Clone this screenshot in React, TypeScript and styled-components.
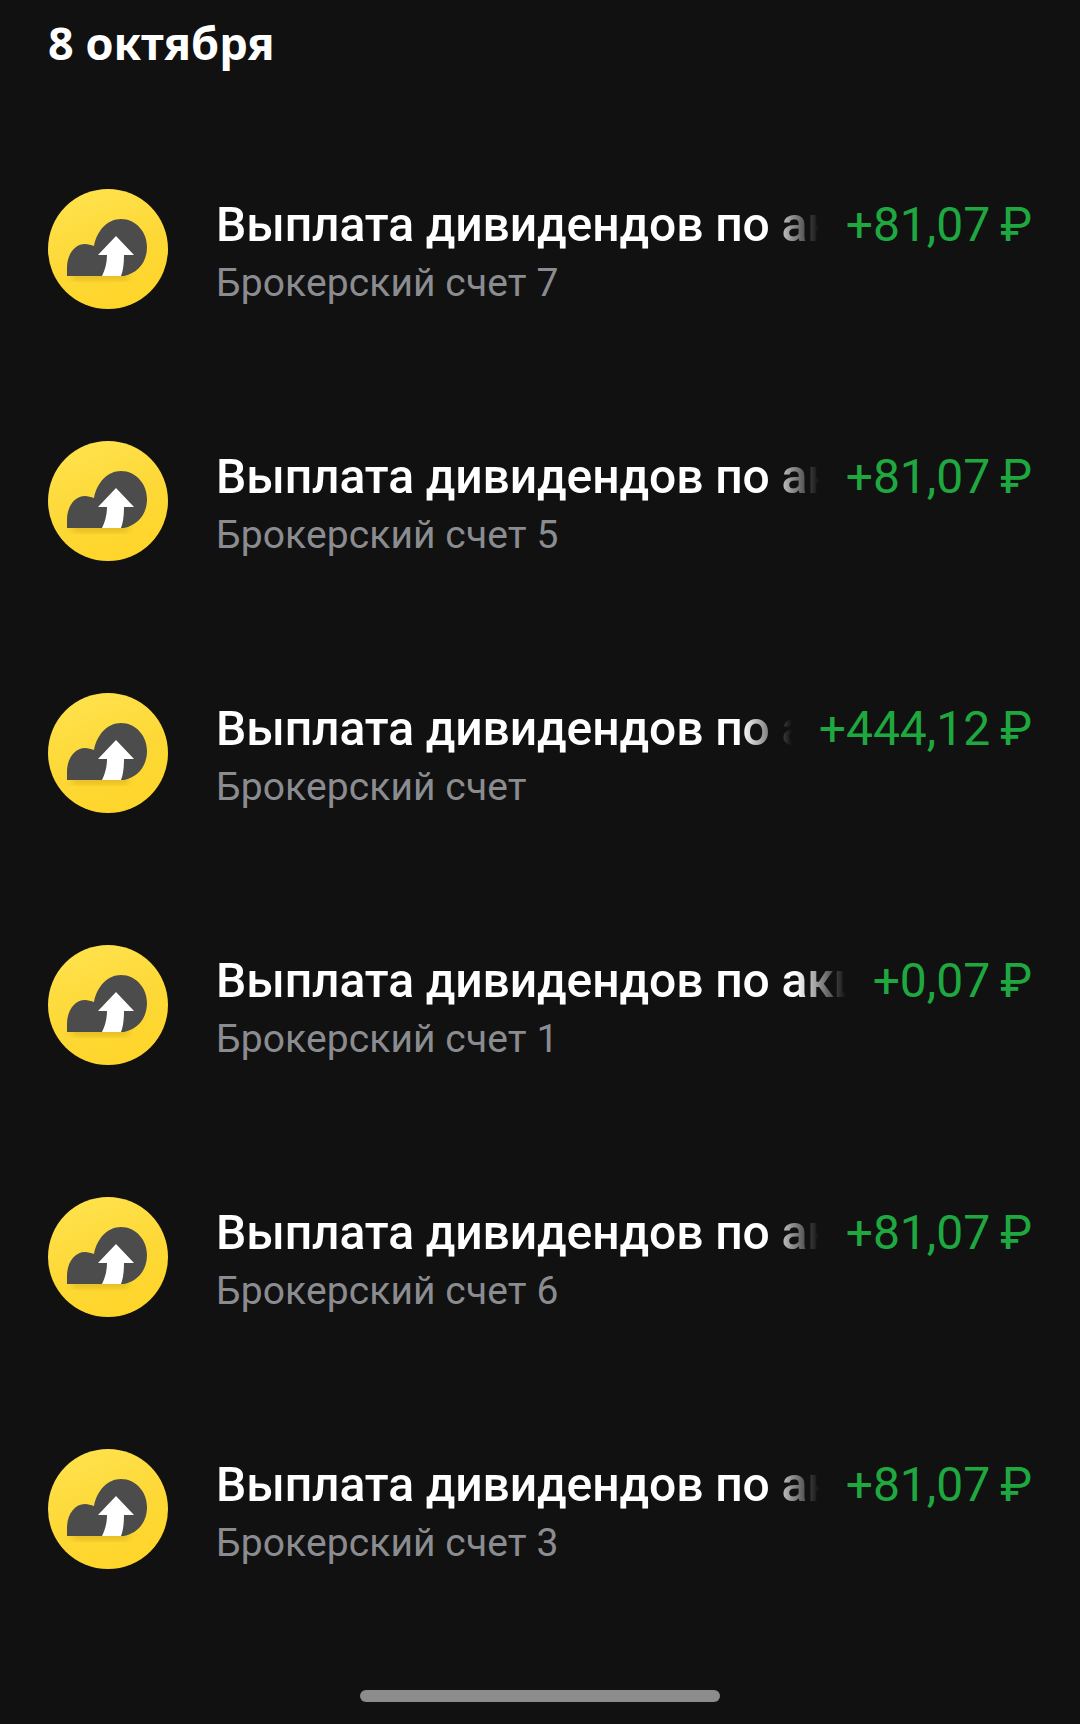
import React from 'react';
import styled, { createGlobalStyle } from 'styled-components';

const GlobalStyle = createGlobalStyle`
  html, body {
    margin: 0;
    padding: 0;
    background: #111112;
  }
`;

const Page = styled.div`
  width: 1080px;
  height: 1724px;
  background: #111112;
  display: flex;
  flex-direction: column;
  overflow: hidden;
  font-family: Roboto, "Liberation Sans", sans-serif;
`;

const DateTitle = styled.h2`
  margin: 0;
  height: 123px;
  padding: 14px 48px 0;
  box-sizing: border-box;
  color: #fff;
  font-family: "Noto Sans", sans-serif;
  font-size: 45px;
  line-height: 58px;
  font-weight: 700;
`;

const List = styled.div`
  display: flex;
  flex-direction: column;
  flex: 1;
`;

const Row = styled.div`
  height: 252px;
  padding: 0 48px;
  display: flex;
  align-items: center;
  gap: 48px;
`;

const IconCircle = styled.div`
  width: 120px;
  height: 120px;
  flex: none;
  border-radius: 50%;
  overflow: hidden;
  background: linear-gradient(160deg, #ffe350 0%, #fdd835 55%, #ffd426 100%);
`;

const Info = styled.div`
  flex: 1;
  min-width: 0;
  padding-top: 6px;
  display: flex;
  flex-direction: column;
  gap: 8px;
`;

const TopLine = styled.div`
  display: flex;
  align-items: center;
  gap: 27px;
`;

const Title = styled.div`
  flex: 1;
  min-width: 0;
  overflow: hidden;
  white-space: nowrap;
  color: #fff;
  font-size: 48px;
  line-height: 54px;
  font-weight: 500;
  letter-spacing: -0.1px;
  -webkit-mask-image: linear-gradient(90deg, #000 calc(100% - 50px), transparent 100%);
  mask-image: linear-gradient(90deg, #000 calc(100% - 50px), transparent 100%);
`;

const Amount = styled.div`
  flex: none;
  color: #1fa83f;
  font-size: 48px;
  line-height: 54px;
  font-weight: 400;
  word-spacing: -2px;
  white-space: nowrap;
`;

const Account = styled.div`
  color: #8b8c90;
  font-size: 39px;
  line-height: 46px;
  letter-spacing: 0.1px;
  white-space: nowrap;
`;

const BottomBar = styled.div`
  height: 54px;
  display: flex;
  justify-content: center;
  padding-top: 20px;
  box-sizing: border-box;
`;

const Handle = styled.div`
  width: 360px;
  height: 12px;
  border-radius: 6px;
  background: #8c8c8c;
`;

const CloudIcon = () => (
  <svg width="120" height="120" viewBox="0 0 120 120">
    <defs>
      <filter id="cloudBlur" x="-20%" y="-50%" width="140%" height="200%">
        <feGaussianBlur stdDeviation="3" />
      </filter>
    </defs>
    <rect x="24" y="84" width="56" height="6" fill="#c79a08" opacity="0.55" filter="url(#cloudBlur)" />
    <path
      d="M19 87 V79 C19 65 27 55 37 55 C40 55 43 56 46 57 C49 41 60 30 73 30 C88 30 99 43 99 58 C99 73 90 84 76 87 Z"
      fill="#4c4c4c"
    />
    <path
      d="M68 47 L86 66 H76 C76 75 75 82 73 87 H54 C57 81 59 74 59 66 H50 Z"
      fill="#fff"
    />
  </svg>
);

const payments = [
  { amount: '+81,07 ₽', account: 'Брокерский счет 7' },
  { amount: '+81,07 ₽', account: 'Брокерский счет 5' },
  { amount: '+444,12 ₽', account: 'Брокерский счет' },
  { amount: '+0,07 ₽', account: 'Брокерский счет 1' },
  { amount: '+81,07 ₽', account: 'Брокерский счет 6' },
  { amount: '+81,07 ₽', account: 'Брокерский счет 3' },
];

export default function App() {
  return (
    <Page>
      <GlobalStyle />
      <DateTitle>8 октября</DateTitle>
      <List>
        {payments.map((p) => (
          <Row key={p.account}>
            <IconCircle>
              <CloudIcon />
            </IconCircle>
            <Info>
              <TopLine>
                <Title>Выплата дивидендов по акциям</Title>
                <Amount>{p.amount}</Amount>
              </TopLine>
              <Account>{p.account}</Account>
            </Info>
          </Row>
        ))}
      </List>
      <BottomBar>
        <Handle />
      </BottomBar>
    </Page>
  );
}
